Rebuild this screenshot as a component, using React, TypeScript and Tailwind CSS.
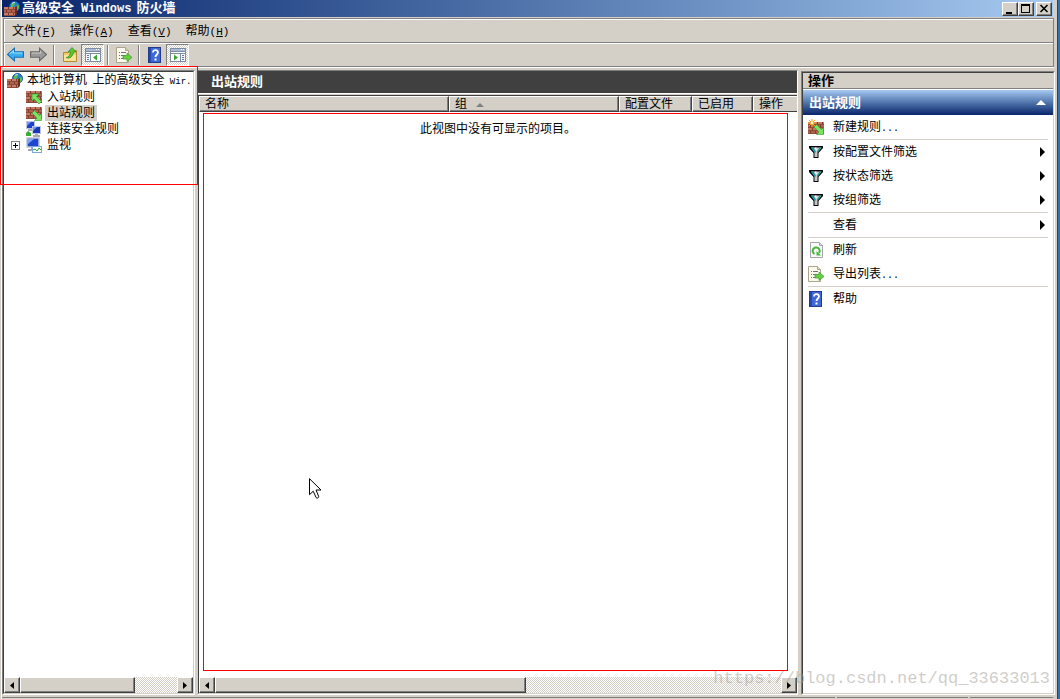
import type { ReactNode } from 'react';
import clsx from 'clsx';

const CJK = "font-['Liberation_Sans','Noto_Sans_CJK_SC',sans-serif]";
const MONO = "font-['Liberation_Mono','Noto_Sans_CJK_SC',monospace]";

function Bricks({ x = 0, y = 0, w = 15, h = 12 }: { x?: number; y?: number; w?: number; h?: number }) {
  const rows = Math.floor(h / 3);
  return (
    <g shapeRendering="crispEdges">
      <rect x={x} y={y} width={w} height={h} fill="#8a4a3c" />
      {Array.from({ length: rows }, (_, r) => (
        <g key={r}>
          <rect x={x} y={y + r * 3} width={w} height="2" fill={r % 2 ? '#b4604a' : '#c87a62'} />
          {[0, 5, 10].map((c) => {
            const bx = c + (r % 2 ? 2 : 4);
            return bx < w ? <rect key={c} x={x + bx} y={y + r * 3} width="1" height="2" fill="#7c3c2e" /> : null;
          })}
        </g>
      ))}
    </g>
  );
}

function Svg({ children, size = 16 }: { children: ReactNode; size?: number }) {
  return (
    <svg width={size} height={size} viewBox="0 0 16 16" className="shrink-0" aria-hidden="true">
      {children}
    </svg>
  );
}

function FirewallIcon() {
  return (
    <Svg>
      <circle cx="10.5" cy="5.5" r="5" fill="#2b7fd0" stroke="#16549c" />
      <path d="M7 3 10 1l1 2-2 3-2 1zM12 5l3-1v3l-2 3-2-2z" fill="#59bd4b" />
      <path d="M8 2.5c1-1 2-1 3-1" stroke="#d5f1ff" fill="none" />
      <Bricks x={0} y={6} w={11} h={9} />
      <path d="M11 6l2-1v8l-2 2z" fill="#6b2d20" />
    </Svg>
  );
}

function InboundIcon() {
  return (
    <Svg>
      <Bricks x={0} y={2} w={16} h={12} />
      <path d="M6 5h7l-2.500 2.500 5 5-2.500 2.500-5-5L6 12z" fill="#7be360" stroke="#2f9a2b" strokeWidth="0.600" />
    </Svg>
  );
}

function OutboundArrow() {
  return <path d="M15.500 15.500h-7L11 13 6 8l2.500-2.500 5 5 2-2z" fill="#7be360" stroke="#2f9a2b" strokeWidth="0.600" />;
}

function OutboundIcon() {
  return (
    <Svg>
      <Bricks x={0} y={2} w={16} h={12} />
      <OutboundArrow />
    </Svg>
  );
}

function NewRuleIcon() {
  return (
    <Svg>
      <Bricks x={0} y={3} w={16} h={12} />
      <OutboundArrow />
      <path d="M4 0v8M0 4h8M1 1l6 6M7 1L1 7" stroke="#f5a21b" />
      <circle cx="4" cy="4" r="1.500" fill="#fff2a0" />
    </Svg>
  );
}

function ConnectionIcon() {
  return (
    <Svg>
      <rect x="0.5" y="0.5" width="8" height="7" fill="#1e40c8" stroke="#bcc6de" />
      <path d="M1 1h4L1 5z" fill="#6f96f4" />
      <rect x="2" y="8" width="5" height="2" fill="#a9a9b5" />
      <rect x="6.5" y="5.5" width="8" height="7" fill="#1737b4" stroke="#bcc6de" />
      <path d="M7 6h4l-4 4z" fill="#6f96f4" />
      <path d="M9 13h3v1h2v2H7v-2h2z" fill="#a9a9b5" />
      <path d="M0 12l2-2 3 2v3H0z" fill="#3dac35" />
    </Svg>
  );
}

function MonitorIcon() {
  return (
    <Svg>
      <rect x="1" y="1" width="12" height="9" fill="#1e46cf" stroke="#c0c5d0" strokeWidth="1.500" />
      <path d="M2 2h6L2 7z" fill="#7da4f8" />
      <path d="M5 10h4v2h2v2H2v-2h3z" fill="#a4a8b4" />
      <rect x="6.5" y="9.5" width="9" height="6" fill="#f5fbff" stroke="#7fa6d9" />
      <path d="M7 13l2-1 2 2 2-3 2 2" stroke="#2ea832" fill="none" />
    </Svg>
  );
}

function ArrowIcon({ back }: { back?: boolean }) {
  return (
    <Svg size={17}>
      {back ? (
        <>
          <path d="M.5 8 7 2v3.500h8.500v5H7V14z" fill="#38aef0" stroke="#1670b8" />
          <path d="M2.500 7.500 6 4.500v2h8.500" stroke="#a5e2ff" fill="none" />
        </>
      ) : (
        <>
          <path d="M15.500 8 9 2v3.500H.500v5H9V14z" fill="#9a9a9a" stroke="#686868" />
          <path d="M1.500 6.500H10v-2" stroke="#c9c9c9" fill="none" />
        </>
      )}
    </Svg>
  );
}

function FolderUpIcon() {
  return (
    <Svg>
      <path d="M1.500 5.500h5l1-2h7v11h-13z" fill="#f0cd6b" stroke="#b58a2c" />
      <path d="M2 8h12v6H2z" fill="#f9e296" />
      <path d="M4 10.500c3 0 4-2.500 4.500-5.500H6l4-4.500L14 5h-2.500C11 9 8 12.500 4 10.500z" fill="#58c437" stroke="#2f8b20" strokeWidth="0.700" />
    </Svg>
  );
}

function PaneIcon({ right }: { right?: boolean }) {
  return (
    <Svg>
      <g shapeRendering="crispEdges">
        <rect x="0" y="1" width="16" height="14" fill="#7d8ba3" />
        <rect x="1" y="2" width="14" height="2" fill="#a9bdd8" />
        <rect x="11" y="2" width="1" height="1" fill="#fff" />
        <rect x="13" y="2" width="1" height="1" fill="#fff" />
        <rect x="1" y="5" width="14" height="1" fill="#fff" />
        <rect x={right ? 1 : 6} y="7" width="9" height="7" fill="#fff" />
        <rect x={right ? 11 : 1} y="7" width="4" height="7" fill="#f5f8fc" />
        <path d={right ? 'M12 8h2v1h-2zM12 10h2v1h-2zM12 12h2v1h-2z' : 'M2 8h2v1H2zM2 10h2v1H2zM2 12h2v1H2z'} fill="#5979a8" />
      </g>
      <path d={right ? 'M4 7.500v6l4-3z' : 'M12 7.500v6l-4-3z'} fill="#35a82c" />
    </Svg>
  );
}

function ExportIcon() {
  return (
    <Svg>
      <path d="M.5.500h9l3 3v12H.500z" fill="#faf8ea" stroke="#aaa68e" />
      <path d="M9.500.500v3h3" fill="#ddd9c2" stroke="#aaa68e" />
      <path d="M3 5.500h1m1 0h5M3 8.500h1m1 0h4M3 11.500h1m1 0h4" stroke="#6f7180" />
      <path d="M7 8.500h4V6l5 4.500-5 4v-2.500H7z" fill="#67cf3f" stroke="#3b9c2a" strokeWidth="0.700" />
    </Svg>
  );
}

function HelpIcon() {
  return (
    <Svg>
      <rect x="1.500" y="0.500" width="12" height="15" fill="#4169d5" stroke="#213b8f" />
      <path d="M2 1h2v14H2z" fill="#2548ac" />
      <path d="M6 5.500C6 2 11 2.500 11 5.500 11 7.500 8.500 7.500 8.500 10" stroke="#fff" strokeWidth="1.800" fill="none" />
      <rect x="7.500" y="11.500" width="2" height="2" fill="#fff" />
    </Svg>
  );
}

function FilterIcon() {
  return (
    <Svg>
      <path d="M1 2h14v2l-4.500 5v5h-5V9L1 4z" fill="#000" />
      <path d="M3 3.500h10.500L9.500 8.500V13h-3V8.500z" fill="#c4c8ca" />
      <path d="M3 3.500h2.500L8 8l-1 1zM11.500 3.500h2L9.500 8.500V12H9V7.500z" fill="#14959c" />
      <path d="M6.500 3.500h2V7z" fill="#fff" />
    </Svg>
  );
}

function RefreshIcon() {
  return (
    <Svg>
      <path d="M2.500.500h9l3 3v12h-12z" fill="#fafafa" stroke="#a2a6aa" />
      <path d="M11.500.500v3h3" fill="#d7d9dc" stroke="#a2a6aa" />
      <path d="M6.500 12A3.500 3.500 0 1 1 11 11" stroke="#45b83a" strokeWidth="2" fill="none" />
      <path d="M8.500 9v4.500h4.500z" fill="#45b83a" />
    </Svg>
  );
}

function Latin({ className = 'text-[10px]', children }: { className?: string; children: ReactNode }) {
  return <span className={clsx(MONO, className)}>{children}</span>;
}

const RAISED =
  'border border-t-white border-l-white border-r-[#404040] border-b-[#404040] bg-[#d4d0c8] shadow-[inset_-1px_-1px_0_#808080]';

const MENUS = [
  { label: '文件', key: 'F' },
  { label: '操作', key: 'A' },
  { label: '查看', key: 'V' },
  { label: '帮助', key: 'H' },
];

type Tool = { label: string; icon: ReactNode; pressed?: boolean } | null;

const TOOLS: Tool[] = [
  { label: '后退', icon: <ArrowIcon back /> },
  { label: '前进', icon: <ArrowIcon /> },
  null,
  { label: '向上一级', icon: <FolderUpIcon /> },
  { label: '显示/隐藏控制台树', icon: <PaneIcon />, pressed: true },
  null,
  { label: '导出列表', icon: <ExportIcon /> },
  null,
  { label: '帮助', icon: <HelpIcon /> },
  { label: '显示/隐藏操作窗格', icon: <PaneIcon right />, pressed: true },
];

const TREE = [
  { label: '入站规则', icon: <InboundIcon /> },
  { label: '出站规则', icon: <OutboundIcon />, selected: true },
  { label: '连接安全规则', icon: <ConnectionIcon /> },
  { label: '监视', icon: <MonitorIcon />, expandable: true },
];

const COLUMNS = [
  { label: '名称', width: 'w-[250px]' },
  { label: '组', width: 'w-[170px]', sorted: true },
  { label: '配置文件', width: 'w-[73px]' },
  { label: '已启用', width: 'w-[61px]' },
  { label: '操作', width: '' },
];

type Action = { label: string; icon?: ReactNode; more?: boolean; dots?: boolean };

const ACTION_GROUPS: Action[][] = [
  [{ label: '新建规则', icon: <NewRuleIcon />, dots: true }],
  [
    { label: '按配置文件筛选', icon: <FilterIcon />, more: true },
    { label: '按状态筛选', icon: <FilterIcon />, more: true },
    { label: '按组筛选', icon: <FilterIcon />, more: true },
  ],
  [{ label: '查看', more: true }],
  [
    { label: '刷新', icon: <RefreshIcon /> },
    { label: '导出列表', icon: <ExportIcon />, dots: true },
  ],
  [{ label: '帮助', icon: <HelpIcon /> }],
];

function TitleBar() {
  return (
    <header className="mr-1 flex h-[17px] shrink-0 items-center bg-linear-to-r from-[#0a246a] to-[#a6caf0] pr-px pl-0.5">
      <FirewallIcon />
      <h1 className={clsx(MONO, 'ml-0.5 flex-1 text-[13px] leading-4 font-bold whitespace-nowrap text-white')}>
        高级安全<span className="pr-[5px] pl-[7px] text-[12px]">Windows</span>防火墙
      </h1>
      <button type="button" aria-label="最小化" className={clsx(RAISED, 'flex h-3.5 w-4 justify-center')}>
        <svg width="12" height="11" className="shrink-0" shapeRendering="crispEdges">
          <rect x="2" y="9" width="6" height="2" />
        </svg>
      </button>
      <button type="button" aria-label="最大化" className={clsx(RAISED, 'flex h-3.5 w-4 justify-center')}>
        <svg width="12" height="11" className="shrink-0" shapeRendering="crispEdges">
          <path d="M1 1h9v9H1zM2 3v6h7V3z" fillRule="evenodd" />
        </svg>
      </button>
      <button type="button" aria-label="关闭" className={clsx(RAISED, 'ml-0.5 flex h-3.5 w-4 justify-center')}>
        <svg width="12" height="11" className="shrink-0">
          <path d="M2.500 2l7 7M9.500 2l-7 7" stroke="#000" strokeWidth="1.600" />
        </svg>
      </button>
    </header>
  );
}

function ScrollBar({ thumb }: { thumb: number }) {
  return (
    <div className="flex h-4 shrink-0 bg-[repeating-conic-gradient(#ffffff_0_25%,#d4d0c8_0_50%)] bg-[length:2px_2px]">
      <button type="button" aria-label="向左滚动" className={clsx(RAISED, 'flex w-4 items-center justify-center')}>
        <svg width="4" height="7">
          <path d="M4 0v7L0 3.500z" />
        </svg>
      </button>
      <div className="flex-1">
        <div className={clsx(RAISED, 'h-4')} style={{ width: `${thumb}%` }} />
      </div>
      <button type="button" aria-label="向右滚动" className={clsx(RAISED, 'flex w-4 items-center justify-center')}>
        <svg width="4" height="7">
          <path d="M0 0v7l4-3.500z" />
        </svg>
      </button>
    </div>
  );
}

function Sunken({ className, children }: { className?: string; children: ReactNode }) {
  return (
    <div className={clsx('flex border border-t-[#808080] border-r-white border-b-white border-l-[#808080]', className)}>
      <div className="flex min-w-0 flex-1 flex-col border border-t-[#404040] border-r-[#d4d0c8] border-b-[#d4d0c8] border-l-[#404040] bg-white">
        {children}
      </div>
    </div>
  );
}

function TreePane() {
  return (
    <Sunken className="relative w-[193px] shrink-0">
      <nav className="flex-1 overflow-hidden pt-px text-[12px] leading-4 whitespace-nowrap">
        <div className="flex h-4 items-center gap-[3px] pl-[3px]">
          <FirewallIcon />
          <span className="pl-px">
            本地计算机<Latin className="text-[9px]">&nbsp;</Latin>上的高级安全
            <Latin className="text-[9px]">&nbsp;Wir.</Latin>
          </span>
        </div>
        <ul>
          {TREE.map((node) => (
            <li key={node.label} className="flex h-4 items-center gap-[3px]">
              <span className="flex w-[19px] shrink-0 justify-center pl-1">
                {node.expandable && (
                  <button type="button" aria-label="展开" className="size-[9px] border border-[#808080]">
                    <svg width="7" height="7" className="block" shapeRendering="crispEdges">
                      <path d="M1 3h5v1H1zM3 1h1v5H3z" />
                    </svg>
                  </button>
                )}
              </span>
              {node.icon}
              <span className={clsx('px-0.5', node.selected && 'bg-[#d4d0c8]')}>{node.label}</span>
            </li>
          ))}
        </ul>
      </nav>
      <ScrollBar thumb={73} />
      <div className="pointer-events-none absolute -top-[5px] -left-[3px] h-[119px] w-[198px] border border-[#ff0000]" />
    </Sunken>
  );
}

function RuleList() {
  return (
    <section className="flex min-w-0 flex-1 flex-col border-t border-r border-b border-t-[#808080] border-r-white border-b-white">
      <h2 className="h-[23px] shrink-0 border-b border-white bg-[#404040] pl-[13px] text-[13px] leading-[22px] font-bold text-white">
        出站规则
      </h2>
      <div className="mt-px flex flex-1 flex-col border-t border-b border-l border-t-[#404040] border-b-[#d4d0c8] border-l-[#404040] bg-white">
        <div className="relative flex-1">
          <table className="w-full table-fixed border-separate border-spacing-0 text-[12px] leading-[14px]">
            <thead>
              <tr>
                {COLUMNS.map((col) => (
                  <th
                    key={col.label}
                    className={clsx(
                      'h-4 overflow-hidden border-t border-b border-l border-t-white border-b-[#404040] border-l-white bg-[#d4d0c8] p-0 pl-[5px] text-left font-normal whitespace-nowrap',
                      col.width,
                      col.width && 'border-r border-r-[#404040] shadow-[inset_-1px_-1px_0_#808080]',
                    )}
                  >
                    {col.label}
                    {col.sorted && (
                      <svg width="8" height="4" className="ml-[9px] inline-block align-middle">
                        <path d="M4 0l4 4H0z" fill="#808080" />
                      </svg>
                    )}
                  </th>
                ))}
              </tr>
            </thead>
            <tbody>
              <tr>
                <td colSpan={COLUMNS.length} className="h-[34px] p-0 text-center">
                  此视图中没有可显示的项目。
                </td>
              </tr>
            </tbody>
          </table>
          <div className="pointer-events-none absolute top-[17px] right-[9px] bottom-1.5 left-1 border border-[#ff0000]" />
          <svg width="13" height="21" viewBox="0 0 13 21" className="pointer-events-none absolute top-[382px] left-[110px]">
            <path d="M.5.700v16l3.700-3.500 3 6.500c.5 1 3 0 2.500-1.200L7 12h5z" fill="#fff" stroke="#000" />
          </svg>
        </div>
        <ScrollBar thumb={55} />
      </div>
    </section>
  );
}

function ActionPane() {
  return (
    <Sunken className="mt-px w-[254px] shrink-0">
      <h2 className="h-4 shrink-0 border-b border-[#808080] bg-[#d4d0c8] pl-[5px] text-[13px] leading-4 font-bold">操作</h2>
      <button
        type="button"
        className="mt-px flex h-[25px] shrink-0 items-center justify-between bg-linear-to-b from-[#a6caf0] to-[#0a246a] pr-[7px] pl-1.5 text-[13px] font-bold text-white"
      >
        出站规则
        <svg width="10" height="5">
          <path d="M5 0l5 5H0z" fill="#fff" />
        </svg>
      </button>
      <div className="divide-y divide-[#d4d0c8] px-[5px]">
        {ACTION_GROUPS.map((group) => (
          <ul key={group[0].label}>
            {group.map((action) => (
              <li key={action.label}>
                <button type="button" className="flex h-6 w-full items-center text-left text-[12px]">
                  <span className="mr-[9px] w-4 shrink-0">{action.icon}</span>
                  <span className="flex-1">
                    {action.label}
                    {action.dots && <Latin>...</Latin>}
                  </span>
                  {action.more && (
                    <svg width="5" height="10" className="mr-[3px]">
                      <path d="M0 0v10l5-5z" />
                    </svg>
                  )}
                </button>
              </li>
            ))}
          </ul>
        ))}
      </div>
    </Sunken>
  );
}

export default function App() {
  return (
    <div className={clsx(CJK, 'relative flex h-screen overflow-hidden border-r-2 border-[#3a6ea5] bg-[#d4d0c8] text-black')}>
      <div className="flex min-w-0 flex-1 flex-col border-r border-l border-r-[#404040] border-l-[#d4d0c8] pl-px shadow-[inset_1px_0_0_#fff]">
        <TitleBar />

        <div className="mt-px mr-[3px] ml-px shrink-0 border-r border-b border-l border-[#808080] shadow-[0_1px_0_#fff]">
          <div className="flex h-6 items-center border-t border-[#808080] pt-0.5 pl-px text-[12px] shadow-[inset_1px_1px_0_#fff]">
            {MENUS.map((menu) => (
              <button key={menu.key} type="button" className="px-[7px] leading-4">
                {menu.label}
                <Latin className="text-[11px]">
                  (<u>{menu.key}</u>)
                </Latin>
              </button>
            ))}
          </div>
          <div className="flex h-6 items-center border-t border-[#808080] shadow-[inset_1px_1px_0_#fff]">
            {TOOLS.map((tool, i) =>
              tool ? (
                <button
                  key={tool.label}
                  type="button"
                  aria-label={tool.label}
                  aria-pressed={tool.pressed}
                  className={clsx(
                    'flex h-[22px] w-[23px] items-center justify-center',
                    tool.pressed &&
                      'border border-t-[#808080] border-r-white border-b-white border-l-[#808080] bg-[repeating-conic-gradient(#ffffff_0_25%,#d4d0c8_0_50%)] bg-[length:2px_2px]',
                  )}
                >
                  {tool.icon}
                </button>
              ) : (
                <span key={i} className="mx-[3px] h-5 w-0.5 border-r border-l border-r-white border-l-[#808080]" />
              ),
            )}
          </div>
        </div>

        <main className="mt-[3px] mr-0.5 flex min-h-0 flex-1 gap-[3px]">
          <TreePane />
          <RuleList />
          <ActionPane />
        </main>

        <footer className="mt-0.5 mr-1 flex h-0.5 shrink-0 gap-0.5">
          <div className="flex-1 border-t border-[#808080]" />
          <div className="w-[131px] border-t border-[#808080]" />
          <div className="w-[83px] border-t border-[#808080]" />
        </footer>
      </div>

      <div
        className={clsx(
          MONO,
          'pointer-events-none absolute right-2 bottom-2 text-[17px] leading-6 whitespace-nowrap text-[#a09c94]/50',
        )}
      >
        https://blog.csdn.net/qq_33633013
      </div>
    </div>
  );
}
